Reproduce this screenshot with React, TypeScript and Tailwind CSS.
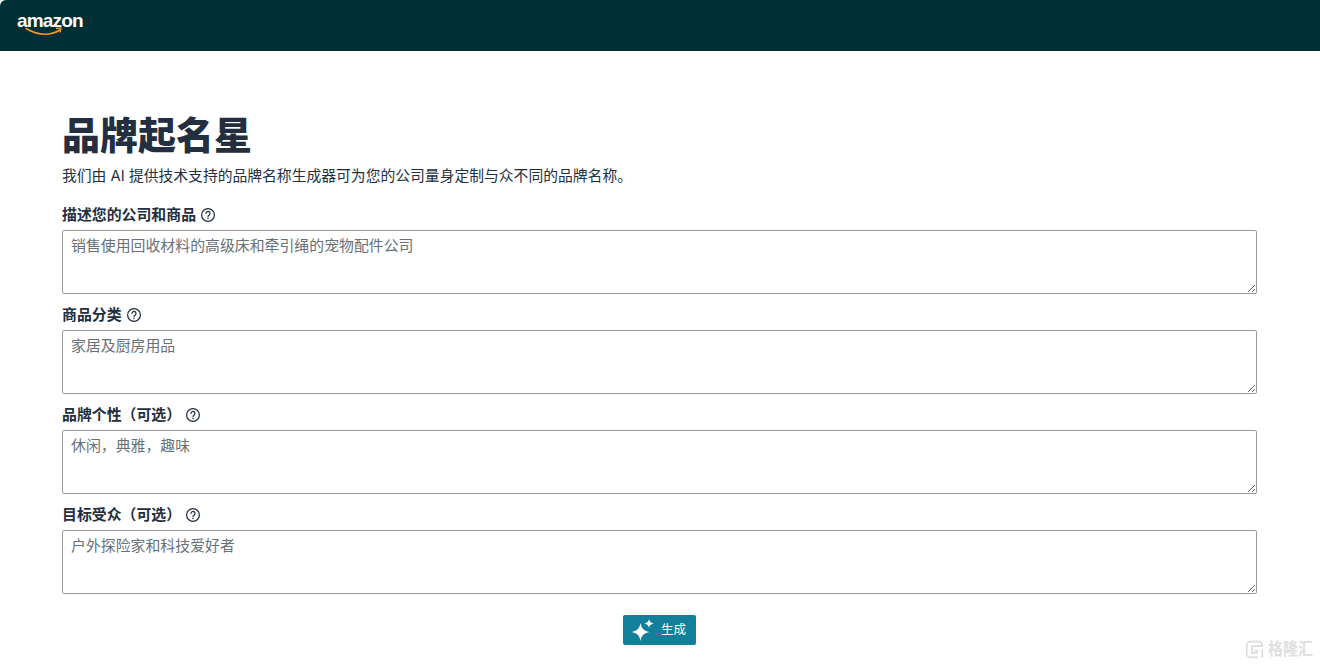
import React from "react";

const cjk = "font-['Inter','Noto_Sans_CJK_SC',sans-serif]";

const fields = [
  { label: "描述您的公司和商品", placeholder: "销售使用回收材料的高级床和牵引绳的宠物配件公司" },
  { label: "商品分类", placeholder: "家居及厨房用品" },
  { label: "品牌个性（可选）", placeholder: "休闲，典雅，趣味" },
  { label: "目标受众（可选）", placeholder: "户外探险家和科技爱好者" },
];

const HelpIcon = () => (
  <svg width="16" height="16" viewBox="0 0 16 16" fill="none" stroke="#232f3e" strokeWidth="1.2" strokeLinecap="round">
    <circle cx="8" cy="8" r="6.4" />
    <path d="M6 6.4a2 2 0 1 1 3.2 1.6c-.7.5-1.2.9-1.2 1.7" />
    <path d="M8 11.500v.1" strokeWidth="1.500" />
  </svg>
);

const Sparkles = () => (
  <svg width="24" height="24" viewBox="0 0 24 24" fill="white">
    <path d="M10.500 5c1 5.300 2.900 7.500 9 9-6.100 1.500-8 3.700-9 9-1-5.300-2.900-7.500-9-9 6.100-1.500 8-3.700 9-9z" />
    <path d="M19 1c.5 2.700 1.500 3.700 4.500 4.500-3 .8-4 1.800-4.500 4.500-.5-2.700-1.500-3.700-4.500-4.500 3-.8 4-1.800 4.500-4.500z" />
  </svg>
);

const Field = ({ label, placeholder }: { label: string; placeholder: string }) => (
  <div className="h-[100px]">
    <div className="flex h-[30px] items-center gap-[4px]">
      <span className="text-[14.9px] leading-[20px] font-bold text-[#232f3e]">{label}</span>
      <HelpIcon />
    </div>
    <textarea
      placeholder={placeholder}
      className="block h-[64px] w-full rounded-[2px] border border-[#959ba3] bg-white px-[8px] py-[5px] text-[14.9px] leading-[20px] text-[#232f3e] placeholder:text-[#687078]"
    />
  </div>
);

export default function App() {
  return (
    <div className={`relative h-[666px] overflow-hidden bg-white ${cjk}`}>
      <header className="flex h-[51px] items-start rounded-tl-[6px] bg-[#002f36] pl-[17px] pt-[10px]">
        <div className="relative h-[28px] w-[68px]">
          <span className="block font-['Liberation_Sans',sans-serif] text-[19px] leading-[22px] font-bold tracking-[-0.85px] text-white">
            amazon
          </span>
          <svg className="absolute left-[8px] top-[17px]" width="54" height="10" viewBox="0 0 54 10" fill="none">
            <path d="M1 1.500c13 7.500 24 7.500 34 1.500" stroke="#f39a1f" strokeWidth="1.500" strokeLinecap="round" />
            <path d="M31 1.500l5-.3-1 4.300" stroke="#f39a1f" strokeWidth="1.300" />
          </svg>
        </div>
      </header>

      <main className="pl-[62px] pr-[63px] pt-[59px]">
        <h1 className="text-[38px] leading-[50px] font-black text-[#232f3e]">品牌起名星</h1>
        <p className="mt-[6px] text-[14.8px] leading-[20px] text-[#232f3e]">
          我们由 AI 提供技术支持的品牌名称生成器可为您的公司量身定制与众不同的品牌名称。
        </p>
        <div className="mt-[14px]">
          {fields.map((field, index) => (
            <Field key={index} label={field.label} placeholder={field.placeholder} />
          ))}
        </div>
        <div className="mt-[15px] flex justify-center">
          <button className="flex h-[30px] w-[73px] items-center gap-[7px] rounded-[2px] bg-[#12809a] pl-[7px] text-[12.5px] text-white">
            <Sparkles />
            生成
          </button>
        </div>
      </main>

      <div className="absolute left-[1245px] top-[638px] flex items-center gap-[4px] text-[#e0e0e0]">
        <svg width="19" height="21" viewBox="0 0 22 22" fill="none" stroke="#dcdcdc" strokeWidth="2">
          <path d="M15 20H6a4 4 0 0 1-4-4V6a4 4 0 0 1 4-4h10a4 4 0 0 1 4 4v1H8v8h6v-3h-3" />
          <path d="M20 11v9" />
        </svg>
        <span className="scale-y-110 text-[15px] leading-[22px] font-bold">格隆汇</span>
      </div>
    </div>
  );
}
